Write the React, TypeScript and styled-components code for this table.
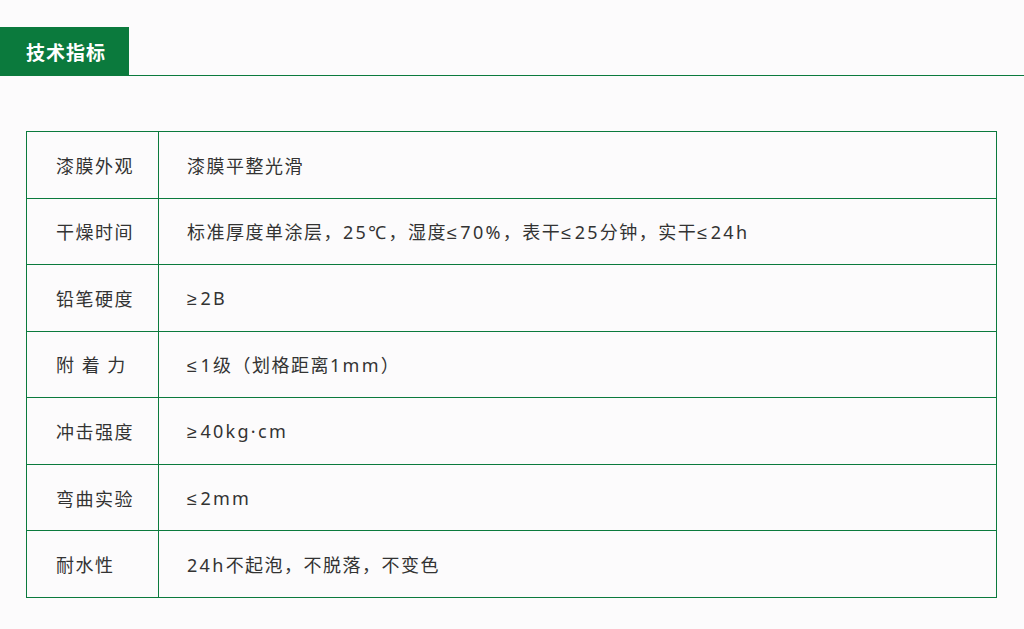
import React from "react";
import styled, { createGlobalStyle } from "styled-components";

const GREEN = "#0b7a3d";

const Global = createGlobalStyle`
  html, body { margin: 0; padding: 0; background: #fcfbfc; }
  body { font-family: "Noto Sans", "Noto Sans CJK SC", sans-serif; color: #333; }
`;

const Page = styled.div`
  width: 1024px;
  height: 629px;
  overflow: hidden;
  padding-top: 27px;
  box-sizing: border-box;
`;

const TitleBar = styled.div`
  display: flex;
  border-bottom: 1px solid ${GREEN};
`;

const TitleTab = styled.div`
  width: 129px;
  height: 48px;
  background: ${GREEN};
  color: #fff;
  font-family: "Noto Sans CJK SC", sans-serif;
  font-size: 19px;
  font-weight: 700;
  letter-spacing: 1px;
  display: flex;
  align-items: center;
  padding-left: 26px;
  box-sizing: border-box;
`;

const Table = styled.table`
  margin: 55px 0 0 26px;
  width: 971px;
  border-collapse: collapse;
  table-layout: fixed;
`;

const Row = styled.tr`
  height: 66.57px;
`;

const Cell = styled.td<{ $label?: boolean }>`
  border: 1px solid ${GREEN};
  padding: 0 0 0 ${(p) => (p.$label ? 29 : 28)}px;
  width: ${(p) => (p.$label ? "132px" : "auto")};
  box-sizing: border-box;
  font-size: 18px;
  letter-spacing: 1.5px;
  color: #333;
  white-space: pre;
  vertical-align: middle;
`;

const Latin = styled.span`
  letter-spacing: 2.3px;
`;

const Sym = styled.span`
  font-family: "Liberation Sans", sans-serif;
  letter-spacing: 3.5px;
`;

const rows: [string, string][] = [
  ["漆膜外观", "漆膜平整光滑"],
  ["干燥时间", "标准厚度单涂层，25℃，湿度≤70%，表干≤25分钟，实干≤24h"],
  ["铅笔硬度", "≥2B"],
  ["附 着 力", "≤1级（划格距离1mm）"],
  ["冲击强度", "≥40kg·cm"],
  ["弯曲实验", "≤2mm"],
  ["耐水性", "24h不起泡，不脱落，不变色"],
];

function renderValue(v: string) {
  return v.split(/([≤≥]|[0-9A-Za-z%℃·]+)/).filter(Boolean).map((part, i) => {
    if (part === "≤" || part === "≥") return <Sym key={i}>{part}</Sym>;
    if (/^[0-9A-Za-z%℃·]+$/.test(part)) return <Latin key={i}>{part}</Latin>;
    return part;
  });
}

export default function App() {
  return (
    <>
      <Global />
      <Page>
        <TitleBar>
          <TitleTab>技术指标</TitleTab>
        </TitleBar>
        <Table>
          <tbody>
            {rows.map(([k, v]) => (
              <Row key={k}>
                <Cell $label>{k}</Cell>
                <Cell>{renderValue(v)}</Cell>
              </Row>
            ))}
          </tbody>
        </Table>
      </Page>
    </>
  );
}
